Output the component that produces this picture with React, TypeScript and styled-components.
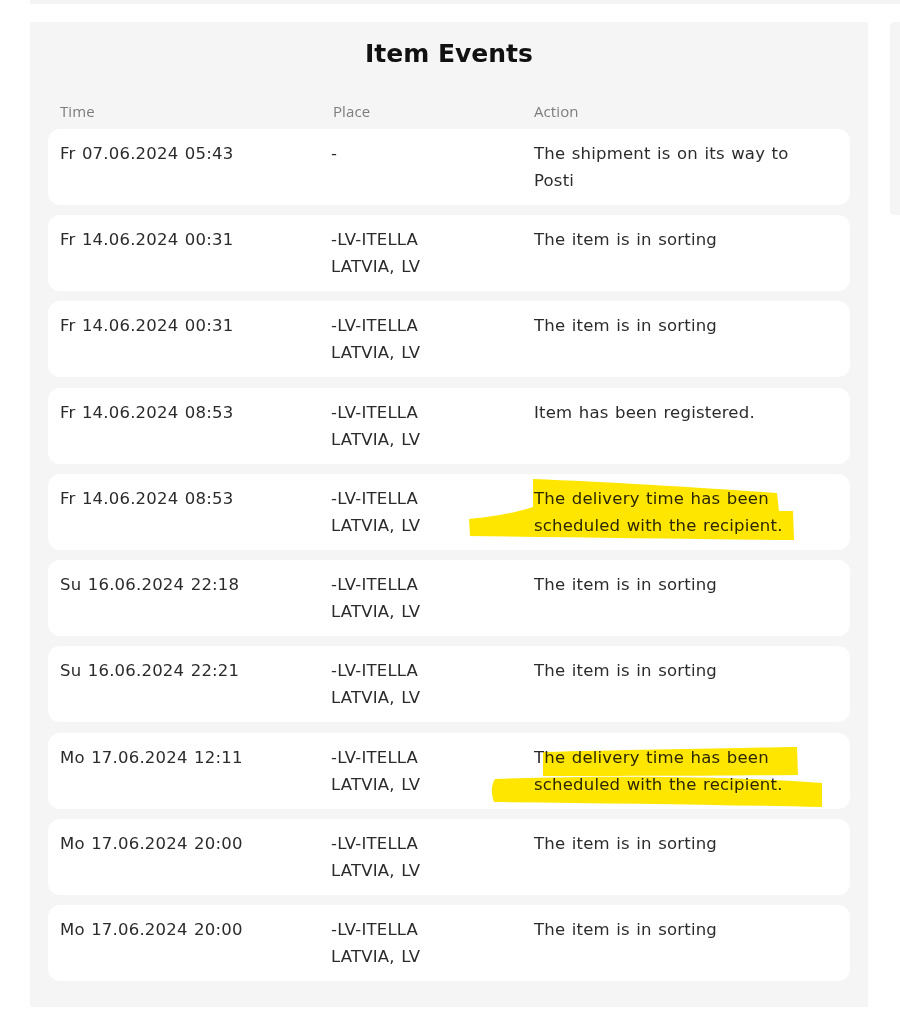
import React from "react";
import styled, { createGlobalStyle } from "styled-components";

const Global = createGlobalStyle`
  html, body { margin: 0; padding: 0; background: #ffffff; }
  body { font-family: "DejaVu Sans", "Noto Sans", sans-serif; color: #222; }
`;

const Page = styled.div`
  padding-left: 30px;
  width: 870px;
`;

const TopStrip = styled.div`
  height: 4px;
  background: #f4f4f4;
`;

const Columns = styled.div`
  display: flex;
  gap: 22px;
  margin-top: 18px;
  align-items: flex-start;
`;

const Panel = styled.section`
  width: 838px;
  box-sizing: border-box;
  background: #f5f5f5;
  padding: 14px 18px 26px;
`;

const Side = styled.aside`
  flex: 1;
  height: 193px;
  background: #f5f5f5;
  border-radius: 4px 0 0 4px;
`;

const Title = styled.h2`
  margin: 0;
  text-align: center;
  font-size: 25px;
  font-weight: 700;
  color: #111;
  line-height: 36px;
`;

const Grid = styled.div`
  display: grid;
  grid-template-columns: 271px 203px 1fr;
`;

const HeaderRow = styled(Grid)`
  margin-top: 27px;
  padding: 0 12px;
  height: 24px;
  align-items: center;
  font-family: "Open Sans", "Noto Sans", sans-serif;
  font-size: 15px;
  letter-spacing: 0.1px;
  color: #7d7d7d;
  margin-bottom: 6px;
`;

const HeaderCell = styled.div<{ $shift?: number }>`
  padding-left: ${(p) => p.$shift ?? 0}px;
`;

const Rows = styled.div`
  display: flex;
  flex-direction: column;
  gap: 10.22px;
`;

const Row = styled(Grid)`
  position: relative;
  background: #fff;
  border-radius: 12px;
  height: 76px;
  box-sizing: border-box;
  padding: 11px 12px 0;
  font-size: 16.5px;
  letter-spacing: 0.2px;
  word-spacing: 1px;
  line-height: 27px;
  color: #2b2b2b;
`;

const Cell = styled.div<{ $max?: number }>`
  max-width: ${(p) => (p.$max ? `${p.$max}px` : "none")};
  position: relative;
  z-index: 1;
`;

const Highlight = styled.svg`
  position: absolute;
  left: 0;
  top: 0;
  width: 802px;
  height: 76px;
  pointer-events: none;
  mix-blend-mode: multiply;
  z-index: 2;
`;

type Ev = { time: string; place: string[]; action: string; mark?: "a" | "b" };

const events: Ev[] = [
  { time: "Fr 07.06.2024 05:43", place: ["-"], action: "The shipment is on its way to Posti" },
  { time: "Fr 14.06.2024 00:31", place: ["-LV-ITELLA", "LATVIA, LV"], action: "The item is in sorting" },
  { time: "Fr 14.06.2024 00:31", place: ["-LV-ITELLA", "LATVIA, LV"], action: "The item is in sorting" },
  { time: "Fr 14.06.2024 08:53", place: ["-LV-ITELLA", "LATVIA, LV"], action: "Item has been registered." },
  { time: "Fr 14.06.2024 08:53", place: ["-LV-ITELLA", "LATVIA, LV"], action: "The delivery time has been scheduled with the recipient.", mark: "a" },
  { time: "Su 16.06.2024 22:18", place: ["-LV-ITELLA", "LATVIA, LV"], action: "The item is in sorting" },
  { time: "Su 16.06.2024 22:21", place: ["-LV-ITELLA", "LATVIA, LV"], action: "The item is in sorting" },
  { time: "Mo 17.06.2024 12:11", place: ["-LV-ITELLA", "LATVIA, LV"], action: "The delivery time has been scheduled with the recipient.", mark: "b" },
  { time: "Mo 17.06.2024 20:00", place: ["-LV-ITELLA", "LATVIA, LV"], action: "The item is in sorting" },
  { time: "Mo 17.06.2024 20:00", place: ["-LV-ITELLA", "LATVIA, LV"], action: "The item is in sorting" },
];

// Brush-stroke highlights in row-local coordinates
const MarkA = () => (
  <Highlight viewBox="0 0 802 76">
    <path
      d="M485 5 C560 8 660 14 729 19 L731 37 L745 37 L746 66 C640 65 520 63 422 62 L421 45 C450 42 470 38 485 33 Z"
      fill="#ffe600"
    />
  </Highlight>
);

const MarkB = () => (
  <Highlight viewBox="0 0 802 76">
    <path
      d="M495 19 C580 17 680 15 749 14 L750 42 C660 43 560 43 495 43 Z"
      fill="#ffe600"
    />
    <path
      d="M447 46 C560 42 680 43 774 50 L774 74 C680 72 560 70 446 69 C443 61 443 52 447 46 Z"
      fill="#ffe600"
    />
  </Highlight>
);

export default function App() {
  return (
    <>
      <Global />
      <Page>
        <TopStrip />
        <Columns>
          <Panel>
            <Title>Item Events</Title>
            <HeaderRow>
              <HeaderCell>Time</HeaderCell>
              <HeaderCell $shift={2}>Place</HeaderCell>
              <HeaderCell>Action</HeaderCell>
            </HeaderRow>
            <Rows>
              {events.map((e, i) => (
                <Row key={i}>
                  <Cell>{e.time}</Cell>
                  <Cell>
                    {e.place.map((p, j) => (
                      <div key={j}>{p}</div>
                    ))}
                  </Cell>
                  <Cell $max={290}>{e.action}</Cell>
                  {e.mark === "a" && <MarkA />}
                  {e.mark === "b" && <MarkB />}
                </Row>
              ))}
            </Rows>
          </Panel>
          <Side />
        </Columns>
      </Page>
    </>
  );
}
